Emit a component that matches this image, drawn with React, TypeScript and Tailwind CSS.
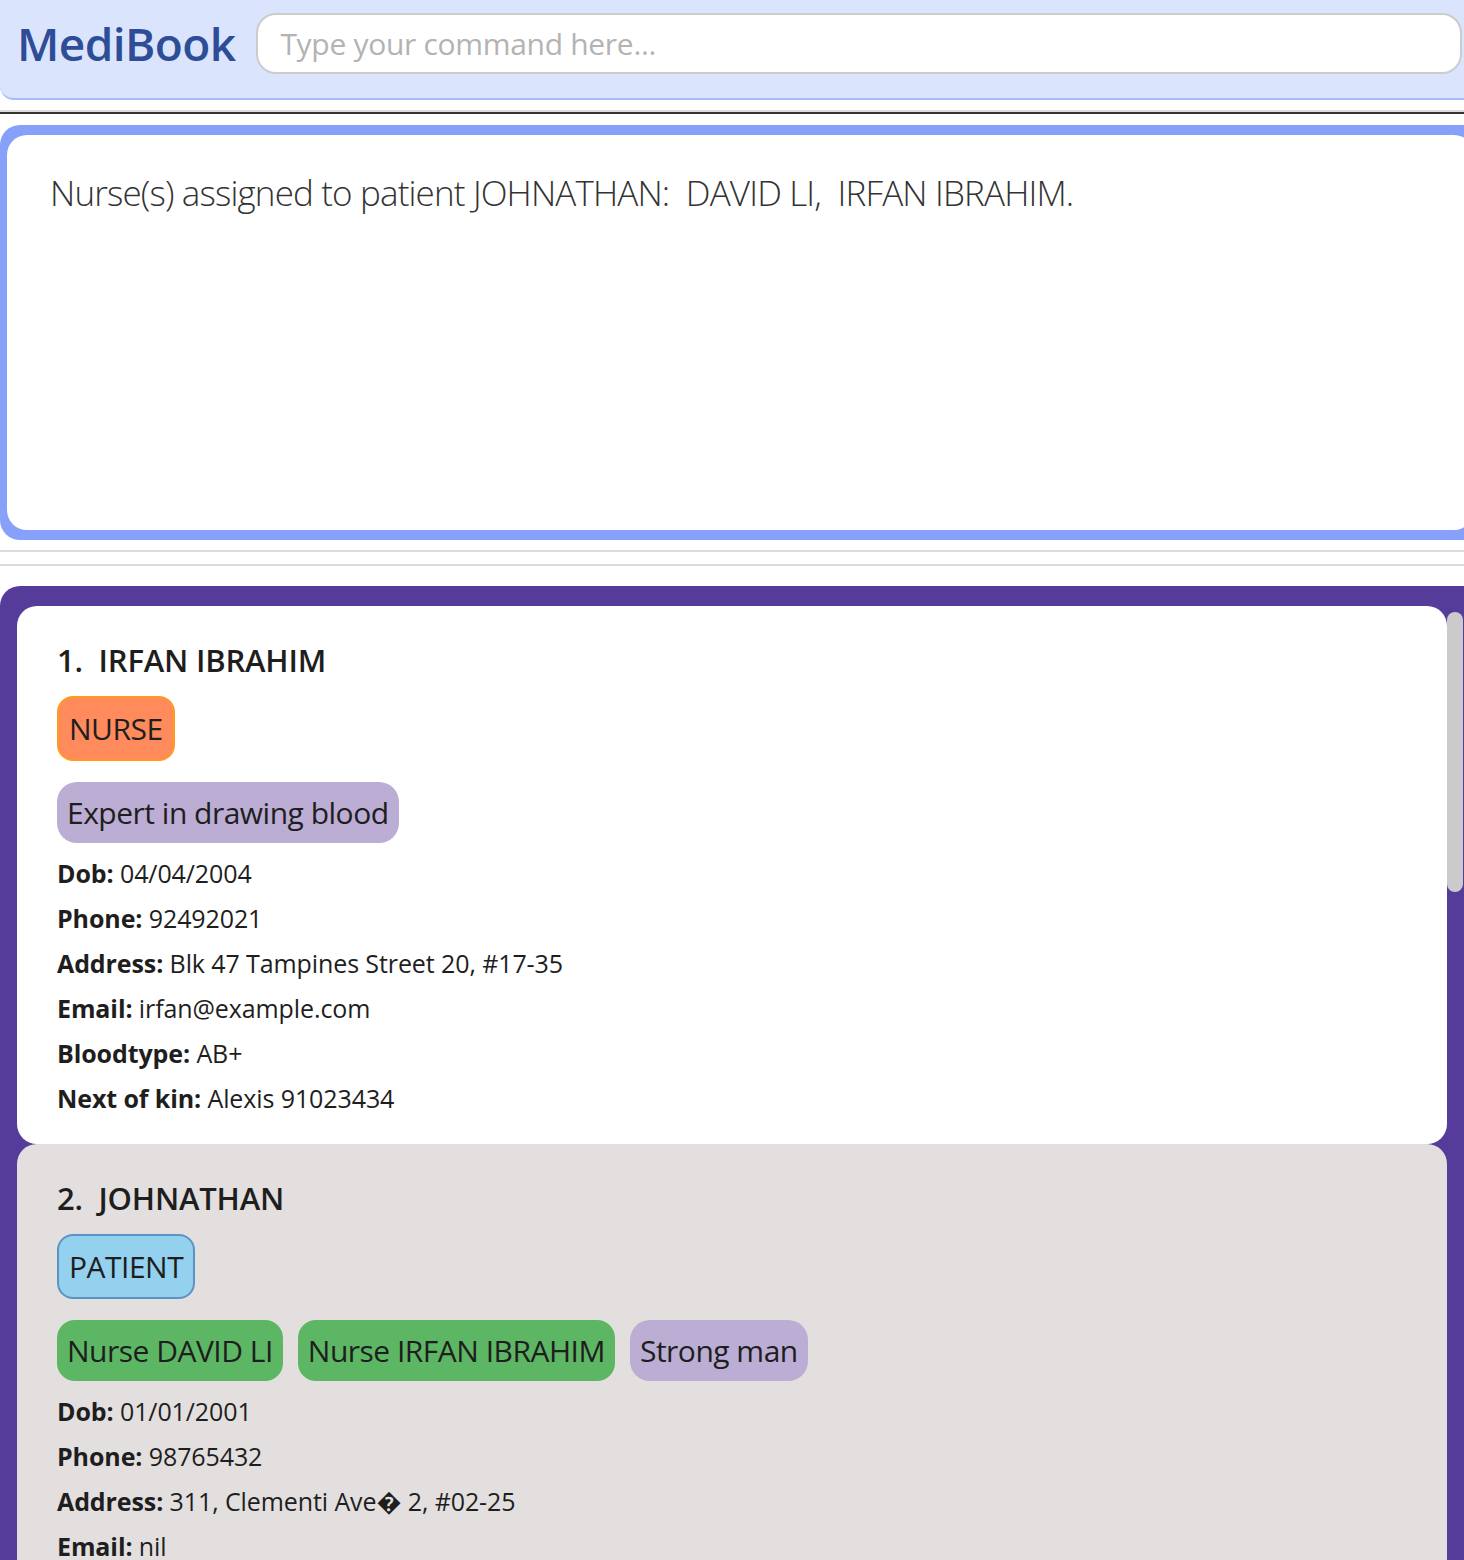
import React from 'react';

// --- Data ---

type Tag = { label: string; kind: 'nurse' | 'patient' | 'assigned' | 'note' };

type Person = {
  index: number;
  name: string;
  tags: Tag[][];
  details: { label: string; value: string }[];
  tone: 'white' | 'grey';
};

const people: Person[] = [
  {
    index: 1,
    name: 'IRFAN IBRAHIM',
    tone: 'white',
    tags: [[{ label: 'NURSE', kind: 'nurse' }], [{ label: 'Expert in drawing blood', kind: 'note' }]],
    details: [
      { label: 'Dob:', value: '04/04/2004' },
      { label: 'Phone:', value: '92492021' },
      { label: 'Address:', value: 'Blk 47 Tampines Street 20, #17-35' },
      { label: 'Email:', value: 'irfan@example.com' },
      { label: 'Bloodtype:', value: 'AB+' },
      { label: 'Next of kin:', value: 'Alexis 91023434' },
    ],
  },
  {
    index: 2,
    name: 'JOHNATHAN',
    tone: 'grey',
    tags: [
      [{ label: 'PATIENT', kind: 'patient' }],
      [
        { label: 'Nurse DAVID LI', kind: 'assigned' },
        { label: 'Nurse IRFAN IBRAHIM', kind: 'assigned' },
        { label: 'Strong man', kind: 'note' },
      ],
    ],
    details: [
      { label: 'Dob:', value: '01/01/2001' },
      { label: 'Phone:', value: '98765432' },
      { label: 'Address:', value: '311, Clementi Ave\uFFFD 2, #02-25' },
      { label: 'Email:', value: 'nil' },
      { label: 'Bloodtype:', value: 'O+' },
      { label: 'Next of kin:', value: 'nil' },
    ],
  },
];

const tagStyles: Record<Tag['kind'], string> = {
  nurse: 'bg-[#ff8a5c] border-2 border-[#ff9b21] rounded-[16px] h-[65px] px-[10px]',
  patient: 'bg-[#93d1ee] border-2 border-[#5a94c6] rounded-[16px] h-[65px] px-[10px]',
  assigned: 'bg-[#5cb663] rounded-[18px] h-[61px] px-[10px]',
  note: 'bg-[#bbadd3] rounded-[20px] h-[61px] px-[10px]',
};

// --- Pieces ---

const Header: React.FC = () => (
  <div className="h-[100px] bg-[#dbe4fd] border-b-2 border-[#a4bdf8] rounded-bl-[14px] flex items-start pt-[13px]">
    <h1 className="ml-[17px] mt-[2px] text-[46px] leading-[56px] font-semibold text-[#2e4d97] tracking-[-0.6px]">MediBook</h1>
    <input
      className="ml-[21px] h-[61px] flex-1 mr-[2px] rounded-[20px] border-2 border-[#cccccc] bg-white px-[22px] text-[30px] text-[#333] tracking-[-0.3px] placeholder:text-[#b3b3b3] outline-none"
      placeholder="Type your command here..."
    />
  </div>
);

const ResultBox: React.FC = () => (
  <div className="mt-[11px] w-[1474px] h-[415px] bg-[#87a1fb] rounded-l-[20px] pt-[10px] pb-[10px] pl-[7px]">
    <div className="h-full bg-white rounded-[20px] pl-[43px] pt-[36px]">
      <p className="whitespace-pre text-[35px] leading-[44px] font-light text-[#333] tracking-[-0.85px]">
        {'Nurse(s) assigned to patient JOHNATHAN:  DAVID LI,  IRFAN IBRAHIM.'}
      </p>
    </div>
  </div>
);

const TagPill: React.FC<{ tag: Tag }> = ({ tag }) => (
  <span className={`inline-flex items-center text-[30px] text-[#1e1e1e] tracking-[-0.5px] ${tagStyles[tag.kind]}`}>
    {tag.label}
  </span>
);

const PersonCard: React.FC<{ person: Person }> = ({ person }) => (
  <div
    className={`rounded-[20px] pl-[40px] pt-[32px] pb-[30px] ${person.tone === 'white' ? 'bg-white' : 'bg-[#e3dfdf]'}`}
  >
    <h2 className="whitespace-pre text-[31px] leading-[44px] font-semibold text-[#1e1e1e] tracking-[-0.2px]">
      {`${person.index}.  ${person.name}`}
    </h2>
    <div className="mt-[14px] flex flex-col gap-[21px]">
      {person.tags.map((row, i) => (
        <div key={i} className="flex gap-[15px]">
          {row.map((t) => (
            <TagPill key={t.label} tag={t} />
          ))}
        </div>
      ))}
    </div>
    <div className="mt-[14px] flex flex-col gap-[13px]">
      {person.details.map((d) => (
        <p key={d.label} className="text-[25px] leading-[32px] text-[#1e1e1e] tracking-[-0.1px]">
          <span className="font-bold">{d.label}</span> {d.value}
        </p>
      ))}
    </div>
  </div>
);

const PersonList: React.FC = () => (
  <div className="mt-[20px] bg-[#553c9a] rounded-tl-[20px] pt-[20px] pl-[17px] flex h-[980px]">
    <div className="w-[1430px] flex flex-col">
      {people.map((p) => (
        <PersonCard key={p.index} person={p} />
      ))}
    </div>
    <div className="mt-[6px] w-[16px] h-[280px] rounded-full bg-[#cbcbcb]" />
  </div>
);

// --- Main ---

export default function App() {
  return (
    <div className="w-[1464px] h-[1560px] overflow-hidden bg-white" style={{ fontFamily: '"Open Sans", "Noto Sans", sans-serif' }}>
      <Header />
      <div className="mt-[10px] h-[2px] bg-[#dcdcdc]" />
      <div className="h-[2px] bg-[#333333]" />
      <ResultBox />
      <div className="mt-[10px] h-[2px] bg-[#dcdcdc]" />
      <div className="mt-[12px] h-[2px] bg-[#dcdcdc]" />
      <PersonList />
    </div>
  );
}
